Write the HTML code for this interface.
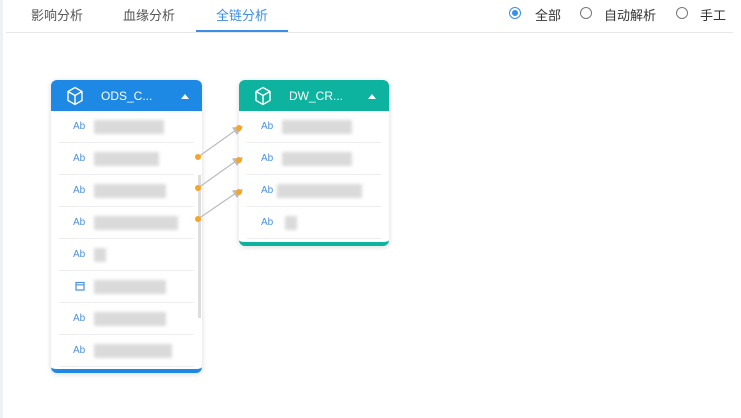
<!DOCTYPE html>
<html><head><meta charset="utf-8"><style>
body{margin:0;width:741px;height:418px;background:#fff;font-family:"Liberation Sans","Noto Sans CJK SC",sans-serif;position:relative;overflow:hidden}
.strip{position:absolute;left:0;top:0;width:3px;height:418px;background:#eef0f3}
.tab{position:absolute;top:5px;font-size:13px;color:#555}
.line{position:absolute;left:6px;right:8px;top:32px;height:1px;background:#e8e8e8}
.ul{position:absolute;left:196px;width:92px;top:30px;height:2px;background:#3b8ee8}
.radio{position:absolute;top:7px;width:12px;height:12px;border:1px solid #777;border-radius:50%;box-sizing:border-box}
.card{position:absolute;background:#fff;border-radius:6px;box-shadow:0 1px 6px rgba(0,0,0,.15);overflow:hidden}
.hd{height:31px;color:#fff;font-size:12px;position:relative}
.hd span{position:absolute;left:50px;top:9px}
.hd i{position:absolute;right:13px;top:14px;border-left:4px solid transparent;border-right:4px solid transparent;border-bottom:5px solid #fff}
.hd svg{position:absolute;left:15px;top:6px}
.row{height:32px;border-bottom:1px solid #eee;margin:0 8px;position:relative;box-sizing:border-box}
.row b{position:absolute;left:14px;top:10px;font-size:10px;color:#4a90e2;font-weight:normal}
.row u{position:absolute;left:35px;top:9px;height:14px;background:#dadada;filter:blur(1.5px)}
.dot{position:absolute;width:6px;height:6px;border-radius:50%;background:#f5a623}
</style></head><body>
<div class="strip"></div>
<div class="tab" style="left:31px">影响分析</div>
<div class="tab" style="left:123px">血缘分析</div>
<div class="tab" style="left:216px;color:#3b8ee8">全链分析</div>
<div class="line"></div><div class="ul"></div>
<div class="radio" style="left:509px;border-color:#3b8ee8"><div style="width:6px;height:6px;border-radius:50%;background:#3b8ee8;margin:2px"></div></div>
<div class="tab" style="left:535px;color:#333">全部</div>
<div class="radio" style="left:580px"></div>
<div class="tab" style="left:604px;color:#333">自动解析</div>
<div class="radio" style="left:676px"></div>
<div class="tab" style="left:700px;color:#333">手工</div>

<div class="card" style="left:51px;top:80px;width:151px;height:293px;border-bottom:4px solid #1e88e5;box-sizing:border-box">
<div class="hd" style="background:#1e88e5"><svg width="18" height="20" viewBox="0 0 18 20" fill="none" stroke="#fff" stroke-width="1.4"><path d="M9 1.5L16 5.5V14.5L9 18.5L2 14.5V5.5Z M2 5.5L9 9.5L16 5.5 M9 9.5V18.5"/></svg><span>ODS_C...</span><i></i></div>
<div class="row"><b>Ab</b><u style="width:70px"></u></div>
<div class="row"><b>Ab</b><u style="width:65px"></u></div>
<div class="row"><b>Ab</b><u style="width:72px"></u></div>
<div class="row"><b>Ab</b><u style="width:84px"></u></div>
<div class="row"><b>Ab</b><u style="width:12px"></u></div>
<div class="row"><svg style="position:absolute;left:16px;top:10px" width="10" height="10" viewBox="0 0 10 10" fill="none" stroke="#4a90e2" stroke-width="1.2"><rect x="1" y="1.5" width="8" height="7.5"/><path d="M1 3.8H9"/></svg><u style="width:72px"></u></div>
<div class="row"><b>Ab</b><u style="width:72px"></u></div>
<div class="row"><b>Ab</b><u style="width:78px"></u></div>
<div style="position:absolute;left:147px;top:95px;width:3px;height:143px;background:#ddd"></div>
</div>

<div class="card" style="left:239px;top:80px;width:150px;height:166px;border-bottom:4px solid #0db39e;box-sizing:border-box">
<div class="hd" style="background:#0db39e"><svg width="18" height="20" viewBox="0 0 18 20" fill="none" stroke="#fff" stroke-width="1.4"><path d="M9 1.5L16 5.5V14.5L9 18.5L2 14.5V5.5Z M2 5.5L9 9.5L16 5.5 M9 9.5V18.5"/></svg><span>DW_CR...</span><i></i></div>
<div class="row"><b>Ab</b><u style="width:70px"></u></div>
<div class="row"><b>Ab</b><u style="width:70px"></u></div>
<div class="row"><b>Ab</b><u style="width:85px;left:30px"></u></div>
<div class="row"><b>Ab</b><u style="width:12px;left:38px"></u></div>
</div>

<svg style="position:absolute;left:0;top:0" width="741" height="418">
<g stroke="#bbb" stroke-width="1.2" fill="#bbb">
<line x1="198" y1="157" x2="236" y2="130"/><path d="M242 127l-9 1 4 6z"/>
<line x1="198" y1="188" x2="236" y2="161"/><path d="M242 158l-9 1 4 6z"/>
<line x1="198" y1="219" x2="236" y2="193"/><path d="M242 190l-9 1 4 6z"/>
</g></svg>
<div class="dot" style="left:195px;top:154px"></div>
<div class="dot" style="left:195px;top:185px"></div>
<div class="dot" style="left:195px;top:216px"></div>
<div class="dot" style="left:236px;top:125px"></div>
<div class="dot" style="left:236px;top:157px"></div>
<div class="dot" style="left:236px;top:189px"></div>
</body></html>
